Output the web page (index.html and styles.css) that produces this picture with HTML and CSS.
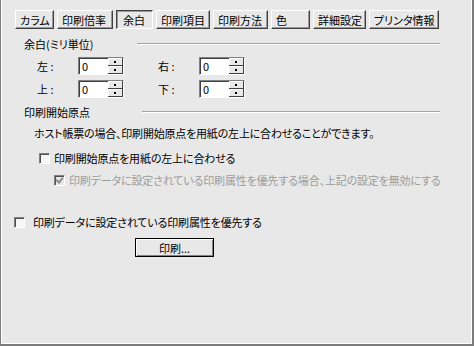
FILE: index.html
```html
<!DOCTYPE html>
<html lang="ja">
<head>
  <meta charset="UTF-8">
  <title>印刷設定 - 余白</title>
  <link rel="stylesheet" href="styles.css">
</head>
<body>
  <div class="dialog">
    <div class="tabs">
      <button class="tab tab-column">カラム</button>
      <button class="tab tab-scale">印刷倍率</button>
      <button class="tab tab-margin active">余白</button>
      <button class="tab tab-items">印刷項目</button>
      <button class="tab tab-method">印刷方法</button>
      <button class="tab tab-color">色</button>
      <button class="tab tab-detail">詳細設定</button>
      <button class="tab tab-printer">プリンタ情報</button>
    </div>

    <div class="group">
      <div class="group-title">
        <span>余白(ミリ単位)</span>
        <i class="rule rule-margin"></i>
      </div>
      <div class="margin-grid">
        <span class="field-label">左 :</span>
        <div class="spin"><span class="spin-value">0</span><span class="spin-buttons"><b class="up"></b><b class="down"></b></span></div>
        <span class="field-label">右 :</span>
        <div class="spin"><span class="spin-value">0</span><span class="spin-buttons"><b class="up"></b><b class="down"></b></span></div>
        <span class="field-label">上 :</span>
        <div class="spin"><span class="spin-value">0</span><span class="spin-buttons"><b class="up"></b><b class="down"></b></span></div>
        <span class="field-label">下 :</span>
        <div class="spin"><span class="spin-value">0</span><span class="spin-buttons"><b class="up"></b><b class="down"></b></span></div>
      </div>
    </div>

    <div class="group group-origin">
      <div class="group-title">
        <span>印刷開始原点</span>
        <i class="rule rule-origin"></i>
      </div>
      <p class="note">ホスト帳票の場合、印刷開始原点を用紙の左上に合わせることができます。</p>
      <label class="check check-origin"><span class="box"></span>印刷開始原点を用紙の左上に合わせる</label>
      <label class="check check-ignore disabled"><span class="box checked"></span>印刷データに設定されている印刷属性を優先する場合、上記の設定を無効にする</label>
    </div>

    <label class="check check-priority"><span class="box"></span>印刷データに設定されている印刷属性を優先する</label>

    <div class="actions">
      <button class="print-button">印刷...</button>
    </div>
  </div>
</body>
</html>
```

FILE: styles.css
```css
body {
  margin: 0;
  font-family: "Noto Sans CJK JP", "Noto Sans", sans-serif;
  font-size: 11px;
  font-feature-settings: "palt";
  color: #000;
}
.dialog {
  box-sizing: border-box;
  width: 474px;
  height: 346px;
  background: #e8e8e8;
  border-left: 1px solid #7c7c7c;
  border-right: 2px solid #7c7c7c;
  border-bottom: 2px solid #7c7c7c;
  box-shadow: inset 1px 0 #fff, inset -1px -1px #fff;
  padding-top: 10px;
}
.tabs {
  display: flex;
  gap: 3px;
  padding-left: 14px;
}
.tab {
  box-sizing: border-box;
  height: 19px;
  padding: 0 0 0 4px;
  text-align: left;
  font: inherit;
  color: #000;
  background: #e8e8e8;
  border: 1px solid;
  border-color: #fff #404040 #404040 #fff;
  box-shadow: inset -1px -1px #9a9a9a;
  line-height: 16px;
}
.tab.active {
  border-color: #404040 #fff #fff #404040;
  box-shadow: inset 1px 1px #9a9a9a;
  padding-left: 6px;
  padding-top: 1px;
}
.tab-column { width: 39px; }
.tab-scale { width: 56px; }
.tab-margin { width: 37px; }
.tab-items { width: 54px; }
.tab-method { width: 55px; }
.tab-color { width: 39px; }
.tab-detail { width: 53px; }
.tab-printer { width: 70px; }

.group-title {
  display: flex;
  align-items: center;
  padding-left: 23px;
  height: 14px;
  line-height: 14px;
  margin-top: 8px;
}
.group-origin .group-title {
  margin-top: 7px;
}
.rule {
  margin-left: auto;
  margin-right: 32px;
  height: 0;
  border-top: 1px solid #a4a4a4;
  border-bottom: 1px solid #fff;
}
.rule-margin { width: 303px; }
.rule-origin { width: 298px; }

.margin-grid {
  display: grid;
  grid-template-columns: 41px 46px 34px 41px 46px;
  grid-template-rows: 18px 18px;
  row-gap: 5px;
  padding-left: 36px;
  margin-top: 6px;
  align-items: center;
}
.margin-grid .spin:nth-of-type(1),
.margin-grid .spin:nth-of-type(3) {
  grid-column: 2;
}
.margin-grid .field-label:nth-of-type(2),
.margin-grid .field-label:nth-of-type(4) {
  grid-column: 4;
}
.field-label {
  white-space: pre;
}
.spin {
  box-sizing: border-box;
  height: 18px;
  display: flex;
  background: #fff;
  border: 1px solid;
  border-color: #808080 #fff #fff #808080;
  box-shadow: inset 1px 1px #404040;
}
.spin-value {
  flex: 1;
  padding-left: 3px;
  line-height: 16px;
}
.spin-buttons {
  width: 15px;
  display: flex;
  flex-direction: column;
}
.spin-buttons b {
  flex: 1;
  background: #e8e8e8;
  box-shadow: inset -1px -1px #404040, inset 1px 1px #fff;
  position: relative;
}
.spin-buttons b::after {
  content: "";
  position: absolute;
  left: 6px;
  top: 3px;
  width: 2px;
  height: 2px;
  background: #000;
}

.note {
  margin: 7px 0 0;
  padding-left: 33px;
  line-height: 14px;
  letter-spacing: -0.2px;
}
.check {
  display: flex;
  align-items: center;
  height: 14px;
  line-height: 14px;
  letter-spacing: -0.15px;
}
.box {
  box-sizing: border-box;
  width: 11px;
  height: 11px;
  margin-right: 4px;
  background: #f6f6f6;
  border: 1px solid;
  border-color: #808080 #fff #fff #808080;
  box-shadow: inset 1px 1px #505050;
  position: relative;
}
.box.checked::after {
  content: "";
  position: absolute;
  left: 2px;
  top: 0;
  width: 3px;
  height: 5px;
  border: solid #8a8a8a;
  border-width: 0 2px 2px 0;
  transform: rotate(40deg);
}
.check-origin {
  margin-top: 11px;
  padding-left: 38px;
}
.check-ignore {
  margin-top: 8px;
  padding-left: 53px;
}
.check.disabled {
  color: #9c9c9c;
}
.check.disabled .box {
  background: #e8e8e8;
}
.check-priority {
  margin-top: 28px;
  padding-left: 13px;
}
.check-priority .box {
  margin-right: 8px;
}

.actions {
  margin-top: 9px;
  padding-left: 134px;
}
.print-button {
  box-sizing: border-box;
  width: 79px;
  height: 19px;
  padding: 0;
  font: inherit;
  color: #000;
  background: #e8e8e8;
  border: 1px solid #000;
  box-shadow: inset 1px 1px #fff, inset -1px -1px #808080;
  line-height: 16px;
}
```
